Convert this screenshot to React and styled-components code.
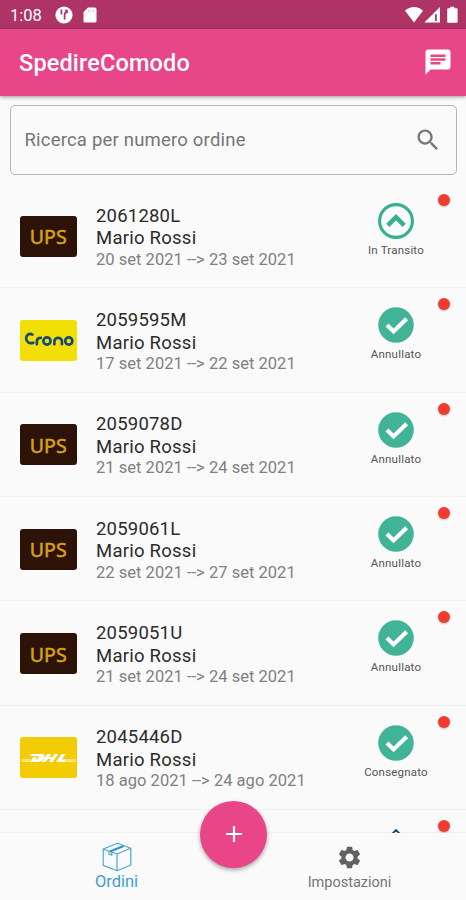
import React from "react"
import styled, { createGlobalStyle } from "styled-components"

const GlobalStyle = createGlobalStyle`
  * {
    box-sizing: border-box;
  }
  body {
    margin: 0;
    background: #fafafa;
    font-family: Roboto, sans-serif;
  }
`

const orders = [
  { code: "2061280L", name: "Mario Rossi", dates: "20 set 2021 --> 23 set 2021", carrier: "ups", status: "In Transito" },
  { code: "2059595M", name: "Mario Rossi", dates: "17 set 2021 --> 22 set 2021", carrier: "crono", status: "Annullato" },
  { code: "2059078D", name: "Mario Rossi", dates: "21 set 2021 --> 24 set 2021", carrier: "ups", status: "Annullato" },
  { code: "2059061L", name: "Mario Rossi", dates: "22 set 2021 --> 27 set 2021", carrier: "ups", status: "Annullato" },
  { code: "2059051U", name: "Mario Rossi", dates: "21 set 2021 --> 24 set 2021", carrier: "ups", status: "Annullato" },
  { code: "2045446D", name: "Mario Rossi", dates: "18 ago 2021 --> 24 ago 2021", carrier: "dhl", status: "Consegnato" },
]

const CarrierLogo = ({ carrier }) => {
  if (carrier === "ups") {
    return <Logo $bg="#2d1307"><UpsText>UPS</UpsText></Logo>
  }
  if (carrier === "crono") {
    return (
      <Logo $bg="#f2df05">
        <svg width="58" height="41" viewBox="0 0 58 41" fill="none" stroke="#174a7c" strokeWidth="2.7" strokeLinecap="round">
          <path d="M12.5 14.6C9.5 12.8 6.2 14.8 6.2 18.2C6.2 21.8 9.6 24.3 13.4 22.7" />
          <path d="M17 24.2V21.5C17 19.2 18.6 17.8 21 17.8" />
          <circle cx="27.2" cy="21" r="3.6" />
          <path d="M34.7 24.2V21.2C34.7 16.7 42.3 16.7 42.3 21.2V24.2" />
          <circle cx="49.2" cy="21" r="3.6" />
        </svg>
      </Logo>
    )
  }
  return (
    <Logo $bg="#f3cc05">
      <svg width="58" height="41" viewBox="0 0 58 41" fill="#fff">
        <path d="M2 22.6h9l-.8 1H2zM2 24.2h8l-.6.8H2zM48 22.6h8v1h-8.8zM47 24.2h9v.8h-9.6z" opacity=".85" />
        <path fillRule="evenodd" d="M11.4 17H22c3.4 0 3.6 2.5 1.8 4.8C22.2 24 20.4 25 17.8 25H10l3.4-4.7h4l-1.3 2.5c2.4 0 3.9-3.7 2-3.7h-8.3z" />
        <path d="M27.5 17h4l-2 3h3.2l2-3h4l-5.7 8h-4l2.2-3H28l-2.2 3h-4z" />
        <path d="M42 17h4l-3.8 5.5h5L45.6 25H36.2z" />
      </svg>
    </Logo>
  )
}

const StatusIcon = ({ status }) => {
  if (status === "In Transito") {
    return (
      <svg width="36" height="36" viewBox="0 0 36 36" fill="none" stroke="#35b18f">
        <circle cx="18" cy="18" r="16.4" strokeWidth="3.1" />
        <path d="M9.8 22.4L18 14.2L26.2 22.4" strokeWidth="4.4" />
      </svg>
    )
  }
  return (
    <svg width="36" height="36" viewBox="0 0 36 36" fill="none">
      <circle cx="18" cy="18" r="17.8" fill="#41b498" />
      <path d="M9 18L15.6 24.4L28.6 11.8" stroke="#fff" strokeWidth="4.2" />
    </svg>
  )
}

const App = () => {
  return (
    <Screen>
      <GlobalStyle />
      <StatusBar>
        <Clock>1:08</Clock>
        <svg width="18" height="18" viewBox="0 0 18 18">
          <circle cx="9" cy="9" r="8.6" fill="#fff" />
          <path d="M6.4 3.6V8.6M9.6 13.6V8.4C9.6 7 10.3 6.4 12 6.4V4.6H10" fill="none" stroke="#ad3465" strokeWidth="1.7" />
        </svg>
        <SdIcon width="14" height="16" viewBox="0 0 14 16">
          <path d="M5 0.5h7A1.5 1.5 0 0 1 13.5 2v12a1.5 1.5 0 0 1-1.5 1.5H2A1.5 1.5 0 0 1 .5 14V5z" fill="#fff" />
          <path d="M5.4 2.5v2.7M8 2.5v2.7M10.6 2.5v2.7" stroke="#e6c3d1" strokeWidth="1" />
        </SdIcon>
        <Spacer />
        <svg width="54" height="18" viewBox="0 0 54 18" fill="#fff">
          <path d="M0 4.8C5-.2 13-.2 18 4.8L9 16.5z" />
          <path fillRule="evenodd" d="M19.4 16.5L35 1V16.5zM30 8.3v6.6h1.8v-6.6z" />
          <path d="M45.2 2.3V.8h4.2v1.5h2.2a1 1 0 0 1 1 1v12.5a1 1 0 0 1-1 1h-8.4a1 1 0 0 1-1-1V3.3a1 1 0 0 1 1-1z" />
        </svg>
      </StatusBar>
      <AppBar>
        <Title>SpedireComodo</Title>
        <svg width="30" height="30" viewBox="0 0 24 24" fill="#fff">
          <path d="M20 2H4c-1.1 0-1.99.9-1.99 2L2 22l4-4h14c1.1 0 2-.9 2-2V4c0-1.1-.9-2-2-2zM6 9h12v2H6V9zm8 5H6v-2h8v2zm4-6H6V6h12v2z" />
        </svg>
      </AppBar>
      <Search>
        <Placeholder>Ricerca per numero ordine</Placeholder>
        <svg width="28" height="28" viewBox="0 0 24 24" fill="#777">
          <path d="M15.5 14h-.79l-.28-.27C15.41 12.59 16 11.11 16 9.5 16 5.91 13.09 3 9.5 3S3 5.91 3 9.5 5.91 16 9.5 16c1.61 0 3.09-.59 4.23-1.57l.27.28v.79l5 4.99L20.49 19l-4.99-5zm-6 0C7.01 14 5 11.99 5 9.5S7.01 5 9.5 5 14 7.01 14 9.5 11.99 14 9.5 14z" />
        </svg>
      </Search>
      <List>
        {orders.map((order) => (
          <Row key={order.code}>
            <CarrierLogo carrier={order.carrier} />
            <Details>
              <Line>{order.code}</Line>
              <Line $spacing="0.25px">{order.name}</Line>
              <Dates>{order.dates}</Dates>
            </Details>
            <Status>
              <StatusIcon status={order.status} />
              <StatusLabel>{order.status}</StatusLabel>
            </Status>
            <Dot />
          </Row>
        ))}
        <Row>
          <NextStatus width="36" height="36" viewBox="0 0 36 36" fill="none">
            <path d="M4 15L18 1L32 15" stroke="#1d4f7c" strokeWidth="1.8" />
          </NextStatus>
          <Dot />
        </Row>
      </List>
      <BottomNav>
        <NavItem $color="#3c9fcf">
          <svg width="30" height="30" viewBox="0 0 30 30" fill="none" stroke="#4ba9d3" strokeWidth="1.2" strokeLinejoin="round">
            <path d="M1.2 7L15.5 1.3L28.8 6.2V23L15 28.7L1.2 23.4zM1.2 7L15 12L28.8 6.2M15 12V28.7" />
            <path d="M6.9 9.1V12.2L9.8 13.2V10.1" />
            <path d="M8 9.5L21.6 3.9" stroke="#2f93bb" strokeWidth="2.2" />
          </svg>
          <NavLabel $size="16.5px">Ordini</NavLabel>
        </NavItem>
        <NavItem $color="#757575" $height="60.5px">
          <svg width="27" height="27" viewBox="0 0 24 24" fill="#616161">
            <path d="M19.14 12.94c.04-.3.06-.61.06-.94 0-.32-.02-.64-.07-.94l2.03-1.58c.18-.14.23-.41.12-.61l-1.92-3.32c-.12-.22-.37-.29-.59-.22l-2.39.96c-.5-.38-1.03-.7-1.62-.94l-.36-2.54c-.04-.24-.24-.41-.48-.41h-3.84c-.24 0-.43.17-.47.41l-.36 2.54c-.59.24-1.13.57-1.62.94l-2.39-.96c-.22-.08-.47 0-.59.22L2.74 8.87c-.12.21-.08.47.12.61l2.03 1.58c-.05.3-.09.63-.09.94s.02.64.07.94l-2.03 1.58c-.18.14-.23.41-.12.61l1.92 3.32c.12.22.37.29.59.22l2.39-.96c.5.38 1.03.7 1.62.94l.36 2.54c.05.24.24.41.48.41h3.84c.24 0 .44-.17.47-.41l.36-2.54c.59-.24 1.13-.56 1.62-.94l2.39.96c.22.08.47 0 .59-.22l1.92-3.32c.12-.22.07-.47-.12-.61l-2.01-1.58zM12 15.6c-1.98 0-3.6-1.62-3.6-3.6s1.62-3.6 3.6-3.6 3.6 1.62 3.6 3.6-1.62 3.6-3.6 3.6z" />
          </svg>
          <NavLabel $size="14.5px" $gap="2px">Impostazioni</NavLabel>
        </NavItem>
        <Fab>
          <svg width="18" height="18" viewBox="0 0 18 18">
            <path d="M9 1V17M1 9H17" stroke="#fff" strokeWidth="2.2" />
          </svg>
        </Fab>
      </BottomNav>
    </Screen>
  )
}

const Screen = styled.div`
  width: 466px;
  height: 900px;
  display: flex;
  flex-direction: column;
  overflow: hidden;
  background: #fafafa;
`
const StatusBar = styled.div`
  flex: none;
  height: 29px;
  display: flex;
  align-items: center;
  padding: 0 7px 0 10px;
  background: #ad3465;
`
const Clock = styled.span`
  width: 44.5px;
  color: #fff;
  font-size: 16.5px;
  line-height: 29px;
  padding-top: 2px;
`
const SdIcon = styled.svg`
  margin-left: 10px;
`
const Spacer = styled.div`
  flex: 1;
`
const AppBar = styled.header`
  flex: none;
  height: 66.5px;
  display: flex;
  align-items: center;
  justify-content: space-between;
  padding: 0 13px 0 19px;
  background: #e94689;
  box-shadow: 0 1px 4px rgba(0, 0, 0, 0.4);
`
const Title = styled.h1`
  margin: 2px 0 0;
  color: #fff;
  font-size: 23.5px;
  font-weight: 500;
  letter-spacing: 0.15px;
`
const Search = styled.div`
  flex: none;
  height: 70px;
  margin: 9px 9px 0 9.5px;
  padding: 0 14px 0 14px;
  display: flex;
  align-items: center;
  justify-content: space-between;
  border: 1.4px solid #b4b4b4;
  border-radius: 5px;
`
const Placeholder = styled.span`
  color: #757575;
  font-size: 18.5px;
  letter-spacing: 0.2px;
`
const List = styled.div`
  flex: 1;
  min-height: 0;
  margin-top: 9.5px;
  overflow: hidden;
`
const Row = styled.div`
  position: relative;
  height: 104.35px;
  display: flex;
  align-items: center;
  padding: 0 29px 0 19.5px;
  border-bottom: 1px solid #f1f1f1;
`
const Logo = styled.div`
  flex: none;
  width: 57.5px;
  height: 41px;
  margin-top: 1px;
  display: flex;
  align-items: center;
  justify-content: center;
  border-radius: 3px;
  background: ${(props) => props.$bg};
  overflow: hidden;
`
const UpsText = styled.span`
  color: #d9a116;
  font-family: "Noto Sans", sans-serif;
  font-size: 19.5px;
  font-weight: 400;
  line-height: 41px;
  padding-top: 1px;
  -webkit-text-stroke: 0.5px #d9a116;
`
const Details = styled.div`
  flex: 1;
  padding: 3px 0 0 19px;
`
const Line = styled.div`
  color: #2b2b2b;
  font-size: 18.5px;
  line-height: 22.4px;
  letter-spacing: ${(props) => props.$spacing || "0.2px"};
`
const Dates = styled.div`
  color: #808080;
  font-size: 16.5px;
  line-height: 20px;
  letter-spacing: 0.03px;
`
const Status = styled.div`
  width: 82px;
  align-self: flex-start;
  padding-top: 19px;
  display: flex;
  flex-direction: column;
  align-items: center;
`
const StatusLabel = styled.span`
  margin-top: 4px;
  color: #555;
  font-size: 11.5px;
  line-height: 14px;
  letter-spacing: 0.2px;
`
const NextStatus = styled.svg`
  align-self: flex-start;
  margin: 19px 23px 0 auto;
`
const Dot = styled.span`
  position: absolute;
  top: 10px;
  right: 16.5px;
  width: 12px;
  height: 12px;
  border-radius: 50%;
  background: #f23b30;
  box-shadow: 0 1px 2px rgba(0, 0, 0, 0.25);
`
const BottomNav = styled.nav`
  position: relative;
  flex: none;
  height: 67.5px;
  display: flex;
  background: #fafafa;
  box-shadow: 0 -1px 1px rgba(0, 0, 0, 0.03);
`
const NavItem = styled.div`
  flex: 1;
  height: ${(props) => props.$height || "59px"};
  display: flex;
  flex-direction: column;
  align-items: center;
  justify-content: flex-end;
  color: ${(props) => props.$color};
`
const NavLabel = styled.span`
  font-size: ${(props) => props.$size};
  line-height: 20px;
  padding-top: ${(props) => props.$gap || "0"};
`
const Fab = styled.div`
  position: absolute;
  left: 50%;
  top: -32px;
  width: 67px;
  height: 67px;
  margin-left: -33px;
  display: flex;
  align-items: center;
  justify-content: center;
  border-radius: 50%;
  background: #e94689;
  box-shadow: 0 2px 4px rgba(0, 0, 0, 0.35);
`
export default App
